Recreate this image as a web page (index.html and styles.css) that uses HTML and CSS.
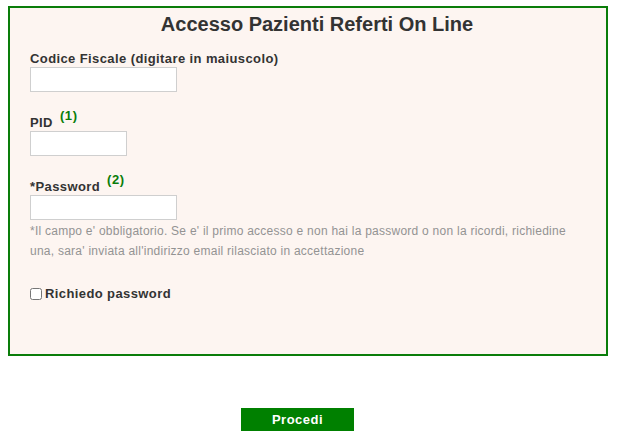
FILE: index.html
```html
<!DOCTYPE html>
<html lang="it">
<head>
<meta charset="utf-8">
<title>Accesso Pazienti Referti On Line</title>
<link rel="stylesheet" href="styles.css">
</head>
<body>
<form class="login">
  <div class="box">
    <h1 class="title">Accesso Pazienti Referti On Line</h1>
    <div class="field field-first">
      <label class="lbl" for="cf">Codice Fiscale (digitare in maiuscolo)</label>
      <input class="inp inp-wide" id="cf" type="text">
    </div>
    <div class="field">
      <label class="lbl" for="pid">PID <sup class="note">(1)</sup></label>
      <input class="inp inp-short" id="pid" type="text">
    </div>
    <div class="field">
      <label class="lbl" for="pw">*Password <sup class="note">(2)</sup></label>
      <input class="inp inp-wide" id="pw" type="password">
    </div>
    <p class="help">*Il campo e' obbligatorio. Se e' il primo accesso e non hai la password o non la ricordi, richiedine una, sara' inviata all'indirizzo email rilasciato in accettazione</p>
    <label class="check"><input class="cb" type="checkbox">Richiedo password</label>
  </div>
  <div class="actions">
    <button class="btn" type="button">Procedi</button>
  </div>
</form>
</body>
</html>
```
FILE: styles.css
```css
html, body {
  margin: 0;
  padding: 0;
  background: #ffffff;
}
body {
  padding: 6px 8px 0 8px;
  font-family: "Liberation Sans", Arial, sans-serif;
  color: #333333;
}
.box {
  box-sizing: border-box;
  width: 600px;
  height: 350px;
  border: 2px solid #0a7d0a;
  background: #fdf5f1;
  padding: 0 20px;
}
.title {
  margin: 4px 0 0 0;
  padding-left: 18px;
  font-size: 20px;
  line-height: 24px;
  font-weight: bold;
  text-align: center;
  color: #333333;
}
.field {
  display: flex;
  flex-direction: column;
  align-items: flex-start;
  margin-top: 23px;
}
.field-first {
  margin-top: 15px;
}
.lbl {
  display: block;
  font-size: 13px;
  line-height: 16px;
  font-weight: bold;
  letter-spacing: 0.4px;
  color: #333333;
}
.note {
  font-size: 13px;
  line-height: 0;
  vertical-align: 7px;
  margin-left: 3px;
  letter-spacing: 0.6px;
  color: #0a7d0a;
  font-weight: bold;
}
.inp {
  box-sizing: border-box;
  height: 25px;
  margin: 0;
  border: 1px solid #cfcfcf;
  background: #ffffff;
  padding: 2px 4px;
}
.inp-wide { width: 147px; }
.inp-short { width: 97px; }
.help {
  margin: 1px 0 0 0;
  font-size: 12px;
  line-height: 20px;
  letter-spacing: 0.25px;
  color: #939393;
  width: 545px;
}
.check {
  display: flex;
  align-items: center;
  margin-top: 25px;
  font-size: 13px;
  line-height: 16px;
  font-weight: bold;
  letter-spacing: 0.4px;
  color: #333333;
}
.cb {
  width: 12px;
  height: 12px;
  margin: 0 3px 0 0;
}
.actions {
  display: flex;
  padding-left: 233px;
  margin-top: 52px;
}
.btn {
  width: 113px;
  height: 23px;
  border: 0;
  margin: 0;
  padding: 0;
  background: #008000;
  color: #ffffff;
  font-family: "Liberation Sans", Arial, sans-serif;
  font-size: 13px;
  font-weight: bold;
  letter-spacing: 0.5px;
}
```
